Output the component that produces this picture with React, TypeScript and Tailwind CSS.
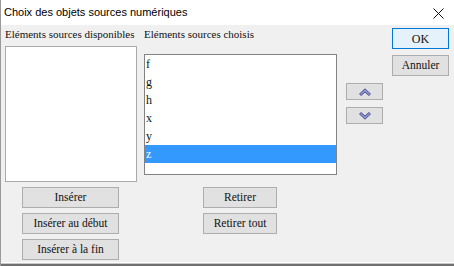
import React from "react";

const serif = "font-['Liberation_Serif','Times_New_Roman',serif]";

function Btn({ label, w, className = "" }: { label: string; w: string; className?: string }) {
  return (
    <div
      className={`${w} h-[21px] bg-[#e1e1e1] border border-[#adadad] flex items-center justify-center text-[11.5px] text-[#111] ${serif} ${className}`}
    >
      {label}
    </div>
  );
}

function Chevron({ up }: { up: boolean }) {
  return (
    <svg width="12" height="8" viewBox="0 0 12 8">
      <path
        d={up ? "M0.5 6 L6 0.8 L11.5 6 L9.8 7.5 L6 4 L2.2 7.5 Z" : "M0.5 2 L6 7.2 L11.5 2 L9.8 0.5 L6 4 L2.2 0.5 Z"}
        fill="#8f93d4"
        stroke="#4d5290"
        strokeWidth="1"
        strokeLinejoin="round"
      />
    </svg>
  );
}

export default function App() {
  const items = ["f", "g", "h", "x", "y", "z"];
  return (
    <div className="w-[454px] h-[266px] flex flex-col border-l border-[#9a9a9a] bg-[#f0f0f0] overflow-hidden">
      {/* title bar */}
      <div className="h-[25px] bg-white flex items-center justify-between pl-[3px] pr-[10px]">
        <span className="text-[11px] text-black font-['Liberation_Sans',Arial,sans-serif] leading-none">
          Choix des objets sources numériques
        </span>
        <svg width="11" height="11" viewBox="0 0 11 11" className="mt-[2px]">
          <path d="M0.5 0.5 L10.5 10.5 M10.5 0.5 L0.5 10.5" stroke="#111" strokeWidth="1" />
        </svg>
      </div>
      {/* body */}
      <div className="h-[237px] flex flex-row pl-[4px]">
        {/* column A */}
        <div className="w-[132px] flex flex-col pt-[3px]">
          <div className={`h-[18px] text-[11px] leading-[13px] text-[#111] whitespace-nowrap ${serif}`}>
            Eléments sources disponibles
          </div>
          <div className="h-[136px] bg-white border border-[#a9a9a9]" />
          <div className="flex flex-col gap-[5px] mt-[5px] ml-[17px]">
            <Btn label="Insérer" w="w-[97px]" />
            <Btn label="Insérer au début" w="w-[97px]" />
            <Btn label="Insérer à la fin" w="w-[97px]" />
          </div>
        </div>
        {/* column B */}
        <div className="w-[193px] ml-[7px] flex flex-col pt-[3px]">
          <div className={`h-[26px] text-[11px] leading-[13px] text-[#111] whitespace-nowrap ${serif}`}>
            Eléments sources choisis
          </div>
          <div className="h-[121px] bg-white border border-[#828282] flex flex-col">
            {items.map((it) => (
              <div
                key={it}
                className={`h-[18px] leading-[18px] text-[12px] pl-[1px] ${serif} ${
                  it === "z" ? "bg-[#3399ff] text-white" : "text-[#111]"
                }`}
              >
                {it}
              </div>
            ))}
          </div>
          <div className="flex flex-col gap-[5px] mt-[12px] ml-[59px]">
            <Btn label="Retirer" w="w-[74px]" />
            <Btn label="Retirer tout" w="w-[74px]" />
          </div>
        </div>
        {/* column C */}
        <div className="w-[37px] ml-[9px] flex flex-col gap-[7px] pt-[58px]">
          <div className="h-[17px] bg-[#e1e1e1] border border-[#adadad] flex items-center justify-center">
            <Chevron up={true} />
          </div>
          <div className="h-[17px] bg-[#e1e1e1] border border-[#adadad] flex items-center justify-center">
            <Chevron up={false} />
          </div>
        </div>
        {/* column D */}
        <div className="w-[57px] ml-[9px] flex flex-col gap-[6px] pt-[3px]">
          <div
            className={`h-[21px] bg-[#e5f1fb] border border-[#0078d7] flex items-center justify-center text-[12px] text-[#111] ${serif}`}
          >
            OK
          </div>
          <Btn label="Annuler" w="w-[57px]" />
        </div>
      </div>
      <div className="h-[1px] bg-white" />
      <div className="h-[1px] bg-[#c8c8c8]" />
      <div className="h-[2px] bg-[#707070]" />
    </div>
  );
}
